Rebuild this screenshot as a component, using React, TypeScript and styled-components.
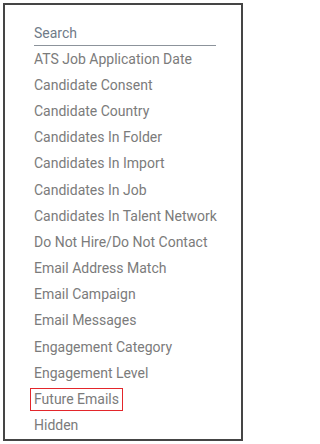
import styled, { createGlobalStyle } from "styled-components";

const GlobalStyle = createGlobalStyle`
  html, body {
    margin: 0;
    padding: 0;
    background: #ffffff;
  }
  body {
    font-family: Roboto, "Liberation Sans", Arial, sans-serif;
  }
`;

const Frame = styled.div`
  box-sizing: border-box;
  width: 240px;
  height: 438px;
  margin: 3px 0 0 3px;
  border: 2px solid #454545;
  background: #ffffff;
  padding: 18px 25px 0 29px;
  overflow: hidden;
`;

const SearchBox = styled.div`
  font-size: 14px;
  line-height: 20px;
  color: #6f7b88;
  padding-bottom: 2px;
  border-bottom: 1px solid #8c939b;
`;

const List = styled.ul`
  list-style: none;
  margin: 0;
  padding: 0;
`;

const Item = styled.li`
  display: flex;
  align-items: center;
  height: 26.2px;
  font-size: 14px;
  color: #7b7b7b;
  white-space: nowrap;
`;

const Label = styled.span<{ $marked?: boolean }>`
  line-height: 21px;
  padding: 0 3px;
  margin-left: -4px;
  border: 1px solid ${(p) => (p.$marked ? "#e3262b" : "transparent")};
`;

const fields = [
  "ATS Job Application Date",
  "Candidate Consent",
  "Candidate Country",
  "Candidates In Folder",
  "Candidates In Import",
  "Candidates In Job",
  "Candidates In Talent Network",
  "Do Not Hire/Do Not Contact",
  "Email Address Match",
  "Email Campaign",
  "Email Messages",
  "Engagement Category",
  "Engagement Level",
  "Future Emails",
  "Hidden",
];

const App = () => {
  return (
    <>
      <GlobalStyle />
      <Frame>
        <SearchBox>Search</SearchBox>
        <List>
          {fields.map((f) => (
            <Item key={f}>
              <Label $marked={f === "Future Emails"}>{f}</Label>
            </Item>
          ))}
        </List>
      </Frame>
    </>
  );
};

export default App;
